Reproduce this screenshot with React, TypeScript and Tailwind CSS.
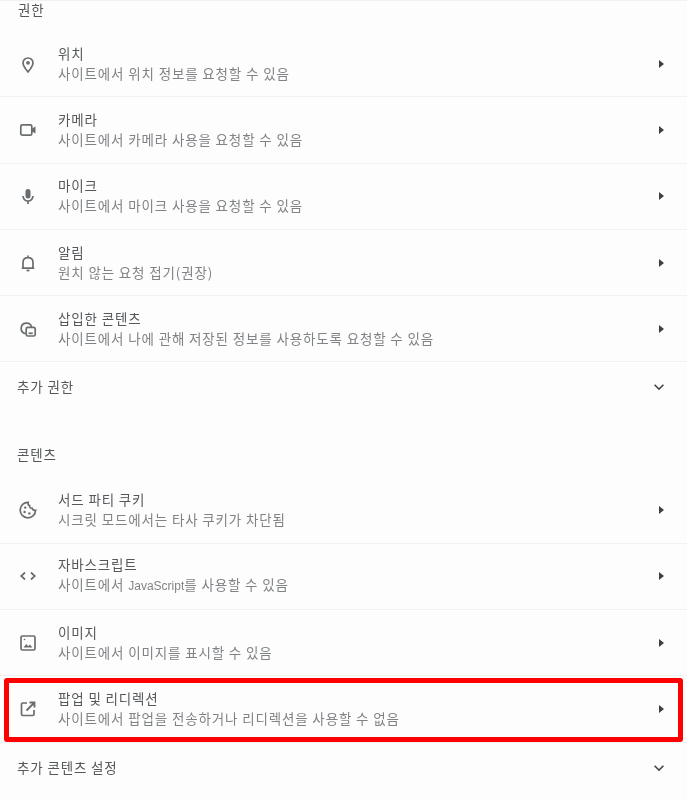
import type { ReactNode } from "react";
import { MdExpandMore } from "react-icons/md";

function Icon({ children }: { children: ReactNode }) {
  return (
    <svg viewBox="0 0 20 20" className="h-5 w-5" fill="none" stroke="currentColor" strokeWidth="1.7">
      {children}
    </svg>
  );
}

const PinIcon = () => (
  <Icon>
    <path d="M10 18c-2.800-3.400-5-6-5-9a5 5 0 0 1 10 0c0 3-2.200 5.600-5 9z" />
    <circle cx="10" cy="8.800" r="1.900" fill="currentColor" stroke="none" />
  </Icon>
);
const CameraIcon = () => (
  <Icon>
    <rect x="2.800" y="4.800" width="11" height="10.400" rx="1.500" />
    <path d="M14 8.400l3.500-2v7.200l-3.500-2z" fill="currentColor" stroke="none" />
  </Icon>
);
const MicIcon = () => (
  <Icon>
    <rect x="7.500" y="3" width="5" height="9.500" rx="2.500" fill="currentColor" stroke="none" />
    <path d="M5 10a5 5 0 0 0 10 0M10 15v3" />
  </Icon>
);
const BellIcon = () => (
  <Icon>
    <path d="M5 15v-5.500c0-2.800 2-4.800 5-4.800s5 2 5 4.800V15M3.800 15.200h12.400M10 2.500v2" />
    <path d="M8.500 17.500h3" />
  </Icon>
);
const EmbeddedIcon = () => (
  <Icon>
    <path d="M7.600 14.600a5.300 5.300 0 1 1 6-6.600" />
    <rect x="8.200" y="8.400" width="9" height="8.600" rx="1.600" />
    <path d="M10.600 14.300h4.200" />
  </Icon>
);
const CookieIcon = () => (
  <Icon>
    <path d="M10.200 2.400a7.700 7.700 0 1 0 7.400 7.800c-1.600.4-2.800-.4-3.200-1.800-1.600.2-3-1-2.800-2.800-1.200-.4-1.800-1.800-1.400-3.200z" />
    <circle cx="7.200" cy="7.600" r="1.200" fill="currentColor" stroke="none" />
    <circle cx="6.600" cy="12" r="1.200" fill="currentColor" stroke="none" />
    <circle cx="11.400" cy="13.400" r="1.200" fill="currentColor" stroke="none" />
  </Icon>
);
const CodeIcon = () => (
  <Icon>
    <path d="M7 6.500l-3.800 3.500 3.800 3.500M13 6.500l3.800 3.500-3.800 3.500" />
  </Icon>
);
const ImageIcon = () => (
  <Icon>
    <rect x="3" y="3" width="14" height="14" rx="1.500" />
    <path d="M5.500 14.500l2.800-3.400 1.900 2.200 1.700-1.800 2.600 3z" fill="currentColor" stroke="none" />
    <circle cx="6.500" cy="6.500" r=".8" fill="currentColor" stroke="none" />
  </Icon>
);
const OpenIcon = () => (
  <Icon>
    <path d="M9 4H4.800a1.300 1.300 0 0 0-1.300 1.300v9.900a1.300 1.300 0 0 0 1.300 1.300h9.900a1.300 1.300 0 0 0 1.300-1.300V11" />
    <path d="M11.500 3.500h5v5M16.500 3.500l-8 8" strokeWidth="1.900" />
  </Icon>
);

function Row({ icon, title, sub }: { icon: ReactNode; title: string; sub: ReactNode }) {
  return (
    <div className="flex h-[66.3px] items-center border-b border-[#f1f1f1] pl-[18px] pr-[23px]">
      <div className="flex w-[40px] shrink-0 items-center text-[#6a6d70]">{icon}</div>
      <div className="min-w-0 flex-1 pb-[2px] text-[13.5px] leading-[20px] tracking-[0.85px]">
        <div className="text-[#55585b]">{title}</div>
        <div className="text-[#808386]">{sub}</div>
      </div>
      <div className="h-0 w-0 border-y-[4px] border-l-[5px] border-y-transparent border-l-[#3c4043]" />
    </div>
  );
}

function ExpandRow({ label }: { label: string }) {
  return (
    <div className="flex h-[50px] items-center pl-[17px] pr-[18px]">
      <span className="flex-1 pb-[2px] text-[13.5px] tracking-[0.85px] text-[#55585b]">{label}</span>
      <MdExpandMore className="h-[20px] w-[20px] text-[#45484b]" />
    </div>
  );
}

export default function App() {
  return (
    <div
      className="h-[800px] w-[687px] overflow-hidden bg-[#fdfdfd] blur-[0.5px]"
      style={{ fontFamily: '"Noto Sans CJK KR", "Liberation Sans", sans-serif' }}
    >
      <div className="h-[31px] border-t border-[#f1f1f1] pl-[18px] text-[13.5px] leading-[16px] tracking-[0.85px] text-[#55585b]">권한</div>
      <Row icon={<PinIcon />} title="위치" sub="사이트에서 위치 정보를 요청할 수 있음" />
      <Row icon={<CameraIcon />} title="카메라" sub="사이트에서 카메라 사용을 요청할 수 있음" />
      <Row icon={<MicIcon />} title="마이크" sub="사이트에서 마이크 사용을 요청할 수 있음" />
      <Row icon={<BellIcon />} title="알림" sub="원치 않는 요청 접기(권장)" />
      <Row icon={<EmbeddedIcon />} title="삽입한 콘텐츠" sub="사이트에서 나에 관해 저장된 정보를 사용하도록 요청할 수 있음" />
      <ExpandRow label="추가 권한" />
      <div className="flex h-[65px] items-center pl-[17px] pt-[19px] text-[13.5px] tracking-[0.85px] text-[#55585b]">콘텐츠</div>
      <Row icon={<CookieIcon />} title="서드 파티 쿠키" sub="시크릿 모드에서는 타사 쿠키가 차단됨" />
      <Row
        icon={<CodeIcon />}
        title="자바스크립트"
        sub={
          <>
            사이트에서 <span className="font-['Liberation_Sans'] text-[12px] tracking-normal">JavaScript</span>를 사용할 수 있음
          </>
        }
      />
      <Row icon={<ImageIcon />} title="이미지" sub="사이트에서 이미지를 표시할 수 있음" />
      <div className="relative">
        <Row icon={<OpenIcon />} title="팝업 및 리디렉션" sub="사이트에서 팝업을 전송하거나 리디렉션을 사용할 수 없음" />
        <div className="absolute inset-x-[4px] bottom-[1px] top-[2px] rounded-[3px] border-[5px] border-[#ff0000]" />
      </div>
      <ExpandRow label="추가 콘텐츠 설정" />
    </div>
  );
}
